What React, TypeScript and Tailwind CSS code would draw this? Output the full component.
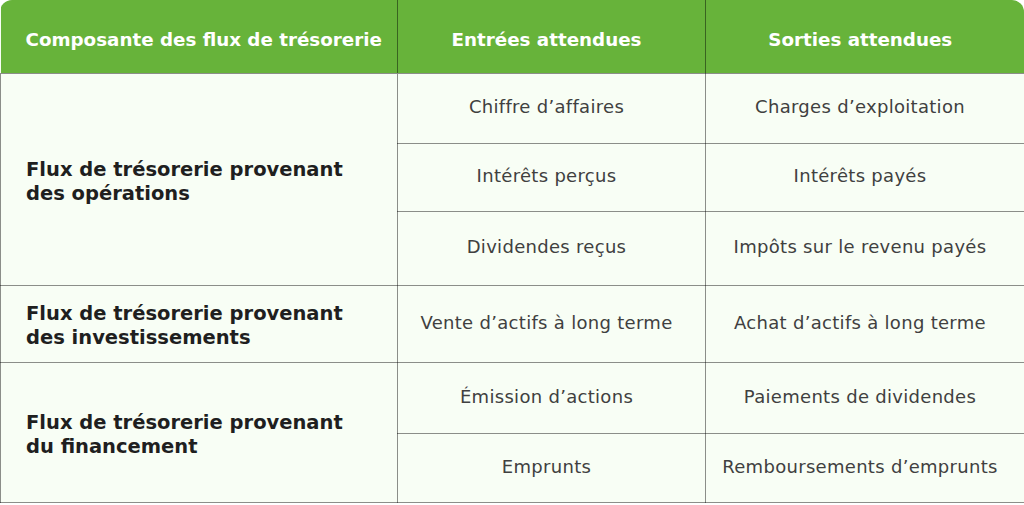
import React from "react";

const font = { fontFamily: "'DejaVu Sans', sans-serif" };

export default function App() {
  const cell = "border border-[#00000070] text-center align-middle pr-[10px] pb-[3px] text-[18px] tracking-[0.3px] text-[#404040]";
  const label = "border border-[#00000070] align-middle text-left pl-[25px] pr-4 pt-[5px] text-[19.5px] font-semibold leading-[24px] text-[#1f1f1f]";
  return (
    <div className="w-[1024px] h-[505px] bg-white" style={font}>
      <div className="w-[1024px] overflow-hidden rounded-t-[12px]">
        <table className="w-[1024px] border-collapse table-fixed bg-[#f8fef5]">
          <colgroup>
            <col className="w-[397px]" />
            <col className="w-[308px]" />
            <col className="w-[319px]" />
          </colgroup>
          <thead>
            <tr className="h-[73px] bg-[#67b33a] text-white text-[18.3px] font-semibold">
              <th className="border-b border-[#00000070] text-left pl-[25px] pt-[7px] font-semibold">Composante des flux de trésorerie</th>
              <th className="border-x border-b border-[#00000070] pt-[7px] pr-[10px] font-semibold">Entrées attendues</th>
              <th className="border-b border-[#00000070] pt-[7px] pr-[10px] font-semibold">Sorties attendues</th>
            </tr>
          </thead>
          <tbody>
            <tr className="h-[70px]">
              <td rowSpan={3} className={label}>Flux de trésorerie provenant<br />des opérations</td>
              <td className={cell}>Chiffre d’affaires</td>
              <td className={cell}>Charges d’exploitation</td>
            </tr>
            <tr className="h-[68px]">
              <td className={cell}>Intérêts perçus</td>
              <td className={cell}>Intérêts payés</td>
            </tr>
            <tr className="h-[74px]">
              <td className={cell}>Dividendes reçus</td>
              <td className={cell}>Impôts sur le revenu payés</td>
            </tr>
            <tr className="h-[77px]">
              <td className={label}>Flux de trésorerie provenant<br />des investissements</td>
              <td className={cell}>Vente d’actifs à long terme</td>
              <td className={cell}>Achat d’actifs à long terme</td>
            </tr>
            <tr className="h-[71px]">
              <td rowSpan={2} className={label}>Flux de trésorerie provenant<br />du financement</td>
              <td className={cell}>Émission d’actions</td>
              <td className={cell}>Paiements de dividendes</td>
            </tr>
            <tr className="h-[69px]">
              <td className={cell}>Emprunts</td>
              <td className={cell}>Remboursements d’emprunts</td>
            </tr>
          </tbody>
        </table>
      </div>
    </div>
  );
}
